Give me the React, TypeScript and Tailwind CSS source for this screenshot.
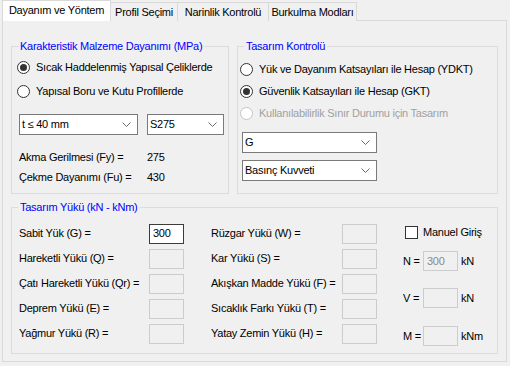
import React from "react";

const font = { fontFamily: '"Liberation Sans", Arial, sans-serif' };

function Chevron() {
  return (
    <svg width="9" height="5" viewBox="0 0 9 5" className="shrink-0">
      <polyline points="0.5,0.5 4.5,4.5 8.5,0.5" fill="none" stroke="#6a6a6a" strokeWidth="1" />
    </svg>
  );
}

function Radio({ label, checked, disabled }: { label: string; checked?: boolean; disabled?: boolean }) {
  return (
    <div className="flex h-full items-center gap-[6px]">
      <span
        className={
          "flex h-[13px] w-[13px] shrink-0 items-center justify-center rounded-full border bg-white " +
          (disabled ? "border-[#c4c4c4]" : "border-[#333333]")
        }
      >
        {checked && <span className="h-[7px] w-[7px] rounded-full bg-[#333333]" />}
      </span>
      <span className={disabled ? "text-[#a0a0a0]" : "text-black"}>{label}</span>
    </div>
  );
}

function Combo({ value, width }: { value: string; width: string }) {
  return (
    <div className={"flex h-[21px] items-center justify-between border border-[#7a7a7a] bg-white pl-[2px] pr-[6px] " + width}>
      <span>{value}</span>
      <Chevron />
    </div>
  );
}

function Box({ value, enabled }: { value?: string; enabled?: boolean }) {
  return (
    <div
      className={
        "flex h-[20px] w-[35px] items-center px-[3px] " +
        (enabled ? "border border-[#3c3c3c] bg-white text-black" : "border border-[#cccccc] bg-[#f0f0f0] text-[#8a8a8a]")
      }
    >
      {value}
    </div>
  );
}

function GroupBox({ title, className, children }: { title: string; className: string; children: React.ReactNode }) {
  return (
    <fieldset className={"border border-[#dcdcdc] " + className}>
      <legend className="ml-[6px] px-[2px] leading-[14px] text-[#0000ff]">{title}</legend>
      {children}
    </fieldset>
  );
}

function LoadRow({ label, value, enabled, labelW }: { label: string; value?: string; enabled?: boolean; labelW: string }) {
  return (
    <div className="flex h-[25px] items-center">
      <span className={"shrink-0 whitespace-nowrap " + labelW}>{label}</span>
      <Box value={value} enabled={enabled} />
    </div>
  );
}

export default function App() {
  const tabs = ["Profil Seçimi", "Narinlik Kontrolü", "Burkulma Modları"];
  const tabW = ["w-[67px]", "w-[91px]", "w-[88px]"];

  return (
    <div className="h-[366px] w-[510px] overflow-hidden bg-[#f0f0f0] text-[11px] tracking-[-0.25px] text-black" style={font}>
      {/* tab strip */}
      <div className="flex h-[21px] items-end pl-[2px]">
        <div className="relative z-10 flex h-[21px] w-[109px] items-center justify-center border-x border-t border-[#d9d9d9] bg-white pb-[1px]">
          Dayanım ve Yöntem
        </div>
        {tabs.map((t, i) => (
          <div
            key={t}
            className={"flex h-[19px] items-center justify-center border-r border-t border-[#d9d9d9] bg-[#f0f0f0] " + tabW[i]}
          >
            {t}
          </div>
        ))}
      </div>

      {/* tab page */}
      <div className="-mt-[1px] ml-[2px] flex h-[342px] w-[505px] flex-col border border-[#d9d9d9] bg-[#f0f0f0] px-[8px] pt-[18px]">
        <div className="flex gap-[8px]">
          <GroupBox title="Karakteristik Malzeme Dayanımı (MPa)" className="h-[155px] w-[218px]">
            <div className="flex flex-col pl-[5px] pt-[2px]">
              <div className="h-[24px]">
                <Radio label="Sıcak Haddelenmiş Yapısal Çeliklerde" checked />
              </div>
              <div className="h-[24px]">
                <Radio label="Yapısal Boru ve Kutu Profillerde" />
              </div>
            </div>
            <div className="ml-[7px] mt-[11px] flex gap-[9px]">
              <Combo value="t ≤ 40 mm" width="w-[119px]" />
              <Combo value="S275" width="w-[77px]" />
            </div>
            <div className="ml-[7px] mt-[12px] flex flex-col">
              <div className="flex h-[20px] items-center">
                <span className="w-[128px]">Akma Gerilmesi (Fy) =</span>
                <span>275</span>
              </div>
              <div className="flex h-[20px] items-center">
                <span className="w-[128px]">Çekme Dayanımı (Fu) =</span>
                <span>430</span>
              </div>
            </div>
          </GroupBox>

          <GroupBox title="Tasarım Kontrolü" className="h-[155px] w-[261px]">
            <div className="flex flex-col pl-[2px] pt-[5px]">
              <div className="h-[22px]">
                <Radio label="Yük ve Dayanım Katsayıları ile Hesap (YDKT)" />
              </div>
              <div className="h-[22px]">
                <Radio label="Güvenlik Katsayıları ile Hesap (GKT)" checked />
              </div>
              <div className="h-[22px]">
                <Radio label="Kullanılabilirlik Sınır Durumu için Tasarım" disabled />
              </div>
            </div>
            <div className="ml-[4px] mt-[8px] flex flex-col gap-[7px]">
              <Combo value="G" width="w-[135px]" />
              <Combo value="Basınç Kuvveti" width="w-[135px]" />
            </div>
          </GroupBox>
        </div>

        <GroupBox title="Tasarım Yükü (kN - kNm)" className="mt-[6px] h-[154px] w-[487px]">
          <div className="flex pl-[7px]">
            <div className="flex w-[192px] flex-col pt-[7px]">
              <LoadRow label="Sabit Yük (G) =" value="300" enabled labelW="w-[130px]" />
              <LoadRow label="Hareketli Yükü (Q) =" labelW="w-[130px]" />
              <LoadRow label="Çatı Hareketli Yükü (Qr) =" labelW="w-[130px]" />
              <LoadRow label="Deprem Yükü (E) =" labelW="w-[130px]" />
              <LoadRow label="Yağmur Yükü (R) =" labelW="w-[130px]" />
            </div>
            <div className="flex w-[192px] flex-col pt-[7px]">
              <LoadRow label="Rüzgar Yükü (W) =" labelW="w-[131px]" />
              <LoadRow label="Kar Yükü (S) =" labelW="w-[131px]" />
              <LoadRow label="Akışkan Madde Yükü (F) =" labelW="w-[131px]" />
              <LoadRow label="Sıcaklık Farkı Yükü (T) =" labelW="w-[131px]" />
              <LoadRow label="Yatay Zemin Yükü (H) =" labelW="w-[131px]" />
            </div>
            <div className="flex flex-col pt-[6px]">
              <div className="flex h-[24px] items-center gap-[5px] pl-[2px]">
                <span className="h-[13px] w-[13px] border border-[#333333] bg-white" />
                <span>Manuel Giriş</span>
              </div>
              <div className="mt-[7px] flex items-center">
                <span className="w-[20px]">N =</span>
                <Box value="300" />
                <span className="ml-[3px]">kN</span>
              </div>
              <div className="mt-[17px] flex items-center">
                <span className="w-[20px]">V =</span>
                <Box />
                <span className="ml-[3px]">kN</span>
              </div>
              <div className="mt-[18px] flex items-center">
                <span className="w-[20px]">M =</span>
                <Box />
                <span className="ml-[3px]">kNm</span>
              </div>
            </div>
          </div>
        </GroupBox>
      </div>
    </div>
  );
}
